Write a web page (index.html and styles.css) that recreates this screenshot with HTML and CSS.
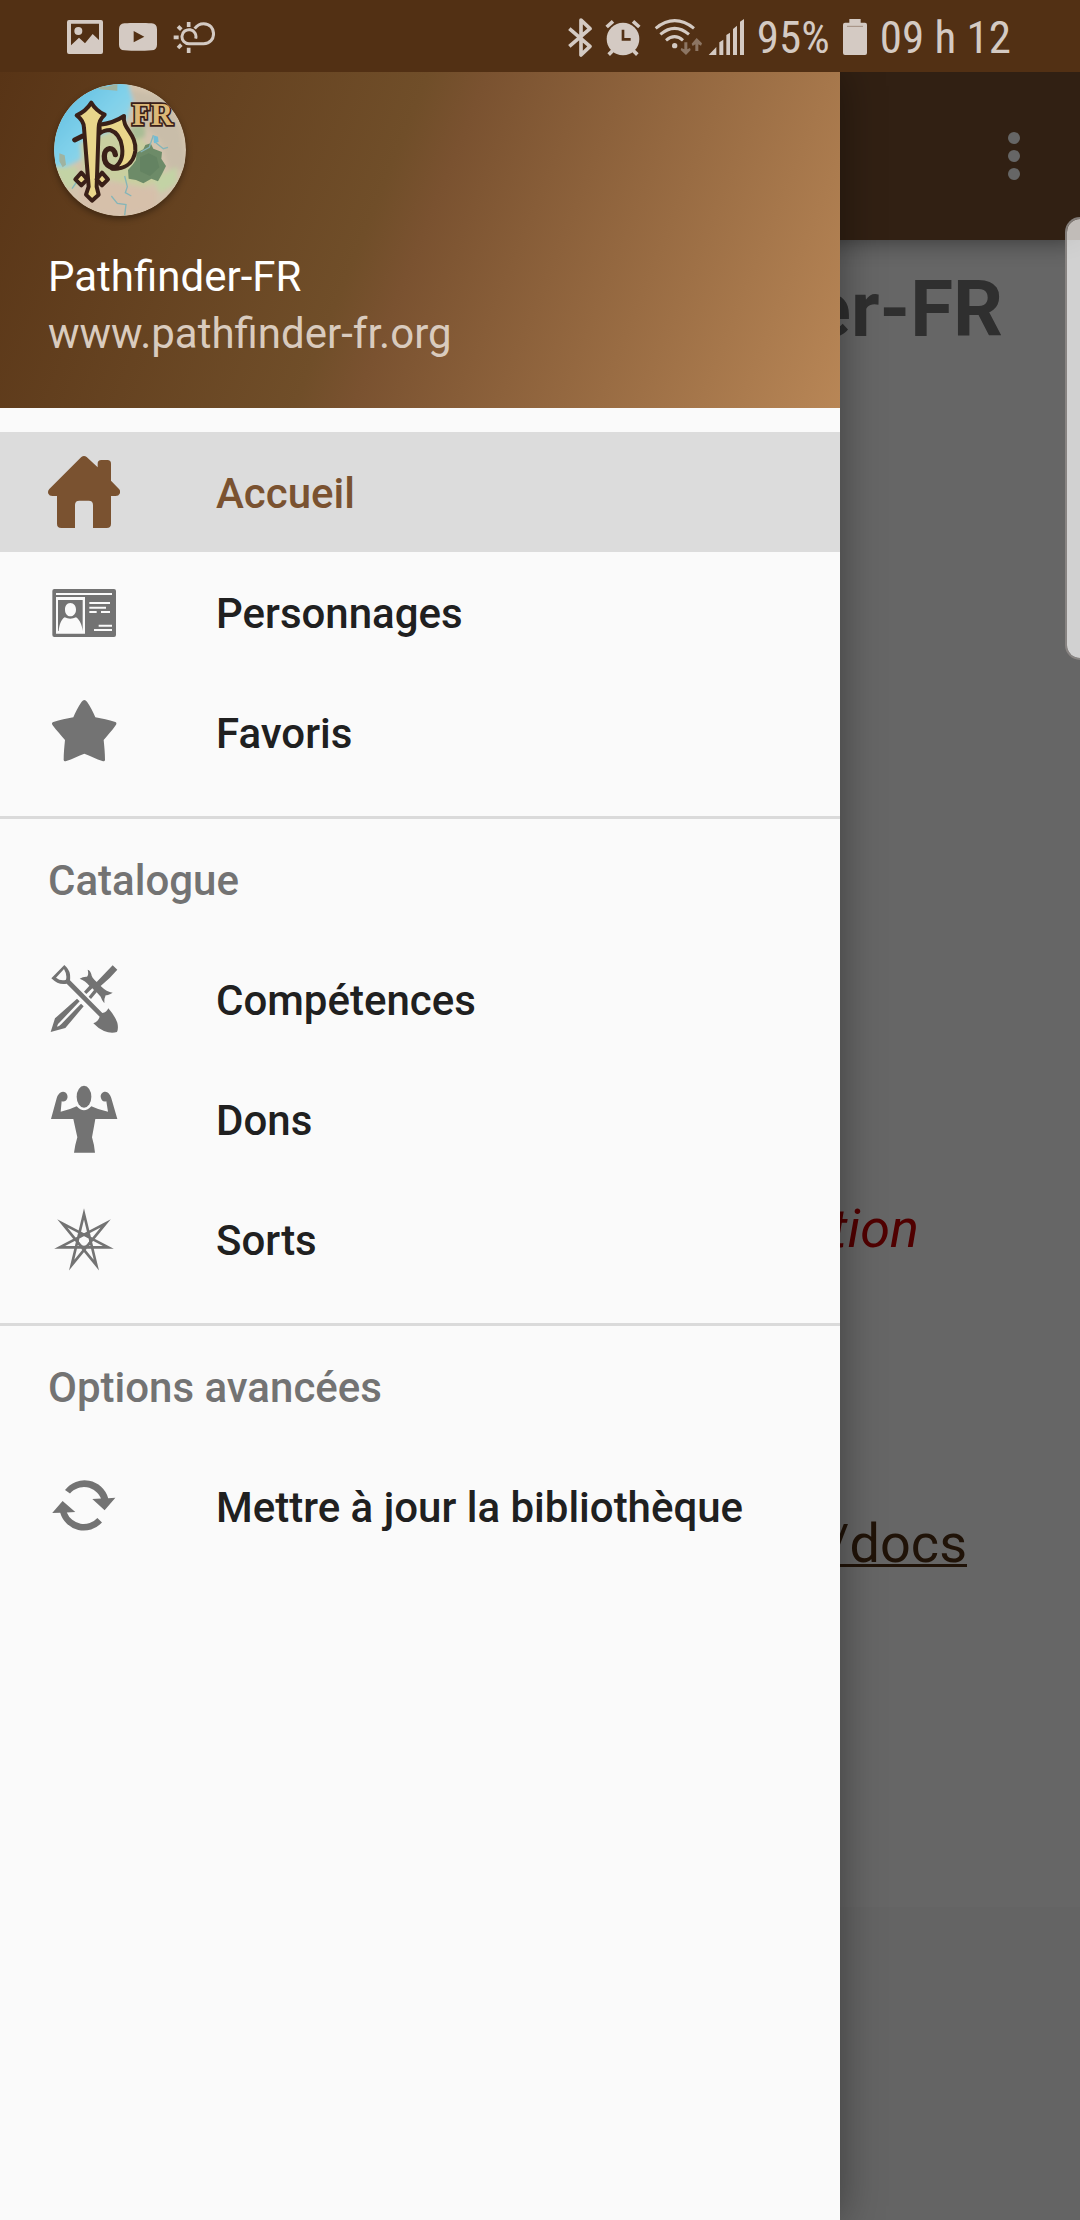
FILE: index.html
```html
<!DOCTYPE html>
<html lang="fr">
<head>
<meta charset="utf-8">
<meta name="viewport" content="width=device-width, initial-scale=1">
<title>Pathfinder-FR</title>
<link rel="stylesheet" href="styles.css">
</head>
<body>
<div class="status">
  <div class="status-left">
    <svg class="ic-image" viewBox="81 60 108 102"><path fill-rule="evenodd" d="M87 60H183Q189 60 189 66V156Q189 162 183 162H87Q81 162 81 156V66Q81 60 87 60ZM93 71V136L117 113L135 130L158 102L177 120V71Z"/><circle cx="115" cy="93" r="12"/></svg>
    <svg class="ic-play" viewBox="240 69 114 84"><path fill-rule="evenodd" d="M256 70Q297 67 338 70Q354 71 354 88V134Q354 150 338 151Q297 154 256 151Q240 150 240 134V88Q240 71 256 70ZM284 93V127L316 110Z"/></svg>
    <svg class="ic-weather" viewBox="396 63 126 99"><g fill="none" stroke="currentColor" stroke-width="9"><path d="M464 116A21 21 0 1 0 444 131H488C528 131 527 71 488 71C476 71 467 77 461 86"/><path stroke-width="11" d="M443 66V81M443 143V159M398 112H413M411 79L421 89M411 144L421 134"/></g></svg>
  </div>
  <div class="status-right">
    <svg class="ic-bt" viewBox="50 52 72 117"><path fill="none" stroke="currentColor" stroke-width="11" stroke-linejoin="round" d="M54 84L116 137L89 163V58L116 84L54 137"/></svg>
    <svg class="ic-alarm" viewBox="165 55 108 111"><circle cx="219" cy="115" r="49"/><path fill="none" stroke="currentColor" stroke-width="11" d="M170 79L189 62M249 62L268 79M176 162L190 148M248 148L262 162"/><path class="cut" d="M219 87V116H242"/></svg>
    <svg class="ic-wifi" viewBox="312 51 144 114"><g fill="none" stroke="currentColor" stroke-width="9"><path d="M317 82Q374 36 432 82M331 100Q374 64 417 100M348 118Q374 96 399 118"/></g><circle cx="374" cy="134" r="8"/><g class="faint"><path d="M403 124H412V145L420 141L422 147L408 162L392 147L394 141L403 145Z"/><path d="M436 150V130L428 135L425 128L440 111L456 127L453 134L445 130V150Z"/></g></svg>
    <svg class="ic-signal" viewBox="472 54 108 108"><path d="M474 162L497 138V162ZM506 162V124L518 116V162ZM527 162V102L538 95V162ZM547 162V84L559 74V162ZM568 162V62L580 54V162Z"/></svg>
    <span class="battery-level">95%</span>
    <svg class="ic-battery" viewBox="870 57 72 108"><path d="M889 57H923V68H936Q942 68 942 74V159Q942 165 936 165H876Q870 165 870 159V74Q870 68 876 68H889Z"/><path class="thin" d="M882 79H930"/></svg>
    <span class="clock">09 h 12</span>
  </div>
</div>

<div class="app">
  <header class="appbar">
    <button class="more" type="button" aria-label="Plus d'options"><svg viewBox="0 0 12 48"><circle cx="6" cy="6" r="6"/><circle cx="6" cy="24" r="6"/><circle cx="6" cy="42" r="6"/></svg></button>
  </header>
  <main class="page">
    <h1 class="title">Pathfinder-FR</h1>
    <p class="notice">application</p>
    <p class="doc"><a href="#docs">/docs</a></p>
  </main>
  <div class="scrim"></div>

  <aside class="drawer">
    <div class="profile">
      <svg class="logo" viewBox="72 42 396 396" role="img" aria-label="Logo Pathfinder-FR">
        <defs>
          <clipPath id="disc"><circle cx="270" cy="240" r="198"/></clipPath>
          <linearGradient id="sea" x1="0" y1="0" x2="1" y2="1"><stop offset="0" stop-color="#58b8dc"/><stop offset=".5" stop-color="#7fd0ea"/><stop offset="1" stop-color="#a8dbe2"/></linearGradient>
          <filter id="soft" x="-20%" y="-20%" width="140%" height="140%"><feGaussianBlur stdDeviation="7"/></filter>
        </defs>
        <g clip-path="url(#disc)">
          <rect x="72" y="42" width="396" height="396" fill="#d3c4ae"/>
          <g filter="url(#soft)">
            <path fill="url(#sea)" d="M60 30H290L310 90L290 150L240 190L170 210L150 270L110 290L60 290Z"/>
            <path fill="#c9cfa0" d="M150 220L250 180L300 210L330 200L370 250L410 330L340 350L240 330L160 310Z"/>
            <path fill="#a9bd95" d="M300 170L345 160L345 200L310 210Z"/>
            <path fill="#c9bda9" d="M300 60L400 80L450 170L470 300L420 300L390 210L330 160Z"/>
            <path fill="#c3d3a5" d="M70 290L140 290L150 340L110 360ZM370 330L440 290L440 340L390 370Z"/>
            <path fill="#d6c0aa" d="M150 350L250 340L380 360L380 420L240 440L150 400Z"/>
          </g>
          <path fill="#9fb3a0" d="M88 250L104 256L108 284L98 292L88 274ZM190 42L230 50L262 42V62L210 58Z"/>
          <path fill="#6d8b68" d="M320 248L340 238L346 225L362 220L370 236L396 246L394 266L408 288L396 312L384 334L364 326L340 340L318 330L296 326L294 300L308 284L318 270Z"/>
          <path fill="#5b7b5c" opacity=".5" d="M330 262L356 250L380 262L388 292L360 318L330 304Z"/>
          <g fill="none" stroke="#85b5b8" stroke-width="4"><path d="M284 318L292 350L286 368L304 378M370 196L358 232L332 246M372 214L400 236L414 232M244 378L262 400L288 404L284 436M144 330L126 356"/></g>
          <path fill="#74bcd4" d="M370 196L384 200L386 216L372 220Z"/>
          <g fill="none" stroke="#3a2018" stroke-linejoin="round" stroke-linecap="round">
            <path stroke-width="15" d="M134 210L158 198"/>
            <path stroke-width="16" d="M256 254C252 228 224 230 223 258C222 290 252 300 276 288"/>
          </g>
          <g fill="#ead68b" stroke="#3a2018" stroke-width="12" stroke-linejoin="round">
            <path d="M208 164Q250 160 282 138C276 178 320 190 316 242C310 284 280 298 246 296C272 284 280 258 276 230C272 204 258 186 240 180Q222 180 210 190Z"/>
            <path d="M184 98Q198 122 224 134Q206 150 206 174L200 350L206 374L186 392L168 374L176 350L162 174Q162 152 140 136Q168 124 184 98Z"/>
            <path d="M154 308L172 328L154 346L136 328ZM216 308L234 328L216 346L200 328Z"/>
          </g>
          <text class="logo-fr" x="306" y="166">FR</text>
        </g>
      </svg>
      <div class="name">Pathfinder-FR</div>
      <div class="site">www.pathfinder-fr.org</div>
    </div>
    <nav class="menu">
      <a class="item active" href="#accueil">
        <svg viewBox="54 78 216 216"><path d="M154 81Q162 75 170 81L203 112V101Q203 90 214 90H232Q243 90 243 101V152L267 177Q273 184 269 191Q266 198 257 198H243V281Q243 294 230 294H189V225Q189 212 176 212H148Q135 212 135 225V294H94Q81 294 81 281V198H67Q58 198 55 191Q52 184 58 177Z"/></svg>
        <span>Accueil</span></a>
      <a class="item" href="#personnages">
        <svg viewBox="54 48 216 216"><path fill-rule="evenodd" d="M73 87H252Q258 87 258 93V225Q258 231 252 231H73Q67 231 67 225V93Q67 87 73 87ZM78 99V105H246V99ZM78 111V221H165V111ZM178 126V132H240V126ZM178 140V146H228V140ZM178 153V159H200V153ZM213 153V159H240V153ZM206 194V200H246V194ZM192 207V213H246V207Z"/><path fill-rule="evenodd" d="M84 120H158V213C156 196 150 180 138 172Q121 180 104 172C92 180 88 196 86 213H84ZM121 129C110 129 105 138 105 149C105 161 112 169 121 169C130 169 138 161 138 149C138 138 132 129 121 129Z"/></svg>
        <span>Personnages</span></a>
      <a class="item" href="#favoris">
        <svg viewBox="54 408 216 216"><path d="M155 425Q163 415 171 425C181 440 190 456 196 472C216 476 236 480 256 486Q262 489 257 496C246 512 233 526 221 540C223 560 225 580 225 600Q224 606 217 603C199 597 181 588 163 581C145 588 127 597 109 603Q102 606 101 600C101 580 103 560 105 540C93 526 80 512 68 496Q63 489 70 486C90 480 110 476 130 472C136 456 145 440 155 425Z"/></svg>
        <span>Favoris</span></a>
    </nav>
    <nav class="menu section">
      <h2 class="subheader"><span>Catalogue</span></h2>
      <a class="item" href="#competences">
        <svg viewBox="54 69 216 216"><path fill-rule="evenodd" d="M103 75Q118 88 120 103Q121 114 120 121L217 219Q230 217 235 205Q255 228 262 248Q266 265 261 276Q242 281 222 273Q205 266 190 250Q205 244 209 230L110 131Q95 134 82 128Q72 123 64 115ZM102 87L78 113Q92 124 108 119Q112 104 102 87Z"/><path fill-rule="evenodd" d="M248 76L262 89Q240 115 212 138Q230 156 248 158Q234 166 227 166Q222 175 223 190Q216 182 212 170L200 157L183 177L176 170L192 150L187 145L169 162L162 155L178 137Q166 122 149 116Q160 109 171 110Q177 104 173 89Q181 91 184 103Q184 112 200 126Z"/><path fill-rule="evenodd" d="M141 176L149 184L90 246Q80 254 82 260Q88 258 95 251L153 191L161 199L106 264L62 276L75 235Z"/></svg>
        <span>Compétences</span></a>
      <a class="item" href="#dons">
        <svg viewBox="54 429 216 216"><ellipse cx="162" cy="470" rx="22" ry="33"/><path d="M63 537L80 475Q86 455 99 455C111 456 114 467 112 475C109 485 101 486 95 484L92 515Q118 510 140 499Q162 523 184 499Q206 510 234 515L229 484C219 487 213 479 212 470C212 460 219 455 226 455Q238 456 244 475L262 537H196Q191 565 186 592Q193 615 195 638H132Q135 615 142 592Q136 565 130 537Z"/></svg>
        <span>Dons</span></a>
      <a class="item" href="#sorts">
        <svg viewBox="54 789 216 216"><path class="star7" d="M162 822L199 975L97 850L235 922H89L227 850L125 975Z"/><circle class="star7 ring" cx="162" cy="901" r="19"/></svg>
        <span>Sorts</span></a>
    </nav>
    <nav class="menu section">
      <h2 class="subheader"><span>Options avancées</span></h2>
      <a class="item" href="#bibliotheque">
        <svg viewBox="0 0 72 72"><path d="M17 20A24.6 24.6 0 0 1 60.2 28.2L67.4 27.7L56.6 40.3L44.3 29L53 28.6A18.4 18.4 0 0 0 22 23.5Z"/><path d="M54 52.5A24.6 24.6 0 0 1 12.2 42.8L4.2 43L14.6 31L27.3 42L18.8 42.4A18.4 18.4 0 0 0 49.4 48Z"/></svg>
        <span>Mettre à jour la bibliothèque</span></a>
    </nav>
  </aside>
</div>
<div class="edge-handle"></div>
</body>
</html>
```
FILE: styles.css
```css
* { box-sizing: border-box; }

body {
  margin: 0;
  min-height: 100vh;
  display: flex;
  flex-direction: column;
  font-family: Roboto, "Noto Sans", sans-serif;
  background: #fafafa;
}

h1, h2, p { margin: 0; }
svg { display: block; flex: none; fill: currentColor; }

/* System status bar */
.status {
  position: relative;
  z-index: 5;
  height: 72px;
  flex: none;
  display: flex;
  justify-content: space-between;
  padding: 2px 69px 0 67px;
  background: #523014;
  color: #d4cac3;
}
.status-left, .status-right { display: flex; align-items: center; }
.status-left { gap: 16px; }
.status-right {
  gap: 13px;
  font-family: "Roboto Condensed", "Liberation Sans Narrow", Roboto, sans-serif;
  font-size: 45px;
  line-height: 56px;
}
.ic-image { width: 36px; height: 34px; }
.ic-play { width: 38px; height: 28px; }
.ic-weather { width: 42px; height: 33px; }
.ic-bt { width: 24px; height: 39px; }
.ic-alarm { width: 36px; height: 37px; }
.ic-wifi { width: 48px; height: 38px; }
.ic-signal { width: 36px; height: 36px; margin-left: -7px; }
.ic-battery { width: 24px; height: 36px; }
.battery-level, .clock { padding-top: 2px; }
.cut { fill: none; stroke: #523014; stroke-width: 8; }
.thin { fill: none; stroke: #a08c7e; stroke-width: 3; }
.faint { opacity: .45; }

/* Screen under the drawer */
.app {
  position: relative;
  flex: 1;
  display: flex;
  flex-direction: column;
}
.appbar {
  height: 168px;
  display: flex;
  align-items: center;
  justify-content: flex-end;
  padding-right: 36px;
  background: #7a5230;
  box-shadow: 0 0 24px rgba(0, 0, 0, .5);
  z-index: 1;
}
.more {
  display: flex;
  justify-content: center;
  width: 60px;
  padding: 24px;
  border: 0;
  background: none;
  color: #fff;
}
.more svg { width: 12px; height: 48px; }
.page {
  padding: 22px 77px 331px;
  text-align: right;
  background: #fff;
}
.title {
  font-size: 78px;
  line-height: 96px;
  font-weight: 700;
  color: #757575;
}
.notice, .doc { font-size: 54px; line-height: 64px; }
.notice {
  padding: 839px 84px 251px 0;
  font-style: italic;
  color: #c80000;
}
.doc { padding-right: 36px; }
.doc a {
  color: #523014;
  text-decoration-thickness: 3px;
}
.scrim {
  position: absolute;
  inset: 0;
  z-index: 2;
  background: rgba(0, 0, 0, .6);
}

/* Navigation drawer */
.drawer {
  position: absolute;
  top: 0;
  bottom: 0;
  left: 0;
  z-index: 3;
  width: 840px;
  max-width: 85%;
  background: #fafafa;
  box-shadow: 0 0 40px rgba(0, 0, 0, .4);
}
.profile {
  height: 336px;
  padding: 12px 48px 0;
  font-size: 42px;
  line-height: 57px;
  background: linear-gradient(112deg, #583416, #704e29 44%, #7a5230 50%, #b88656);
}
.logo {
  width: 132px;
  height: 132px;
  margin: 0 6px 32px;
  border-radius: 50%;
  box-shadow: 0 3px 6px rgba(0, 0, 0, .35);
}
.logo-fr {
  font: 700 92px "Liberation Serif", serif;
  fill: #dcb877;
  stroke: #3a2018;
  stroke-width: 10;
  paint-order: stroke;
}
.name { color: #fff; }
.site { color: #d9cbbe; }

.menu { padding: 24px 0; }
.section {
  padding-top: 0;
  border-top: 3px solid #dadada;
}
.item, .subheader {
  display: flex;
  align-items: center;
  height: 120px;
  padding: 0 48px;
  font-size: 42px;
  line-height: 48px;
  font-weight: 500;
}
.subheader { color: #737373; }
.item {
  gap: 96px;
  color: #737373;
  text-decoration: none;
}
.item svg { width: 72px; height: 72px; }
.item span, .subheader span { padding-top: 4px; }
.item span { color: #202020; }
.active { background: #dcdcdc; }
.active, .active span { color: #7a5230; }
.star7 {
  fill: none;
  stroke: currentColor;
  stroke-width: 8;
  stroke-miterlimit: 10;
}
.ring { stroke-width: 6; }

/* Edge panel handle */
.edge-handle {
  position: absolute;
  top: 217px;
  right: 0;
  z-index: 4;
  width: 15px;
  height: 443px;
  border: 2px solid rgba(140, 136, 134, .9);
  border-right: 0;
  border-radius: 16px 0 0 16px;
  background: rgba(255, 255, 255, .7);
  background-clip: padding-box;
}
```
